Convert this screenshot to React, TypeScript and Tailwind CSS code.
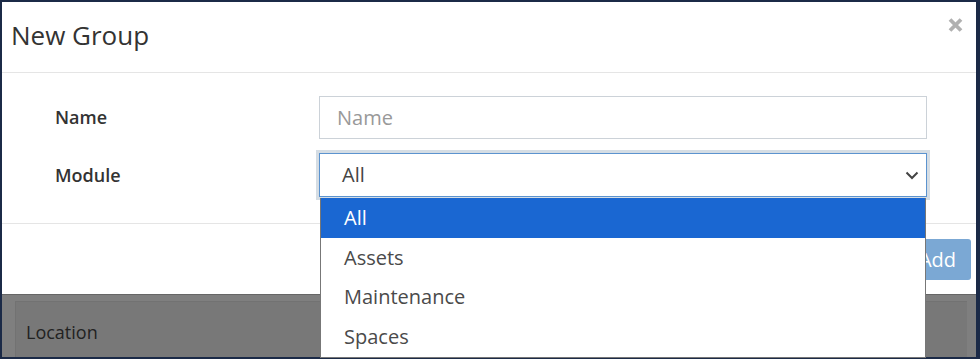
import React from "react";

export default function App() {
  const font = { fontFamily: '"Open Sans", "Noto Sans", sans-serif' };
  return (
    <div
      className="w-[980px] h-[359px] bg-[#1b2a47] pt-[2px] pl-[2px] pr-[4px] pb-[2px] overflow-hidden"
      style={font}
    >
      <div className="relative flex h-full flex-col bg-[#7f7f7f]">
        {/* Modal */}
        <div className="flex h-[293px] flex-col bg-white border-b border-[#666]">
          {/* Header */}
          <div className="relative flex h-[71px] items-center border-b border-[#e5e5e5] pl-[9px]">
            <h4 className="text-[26px] leading-none text-[#333] -mt-[4px]">New Group</h4>
            <svg
              className="absolute right-[13px] top-[16px]"
              width="15"
              height="14"
              viewBox="0 0 15 14"
            >
              <path d="M2 1.5 L13 12.5 M13 1.5 L2 12.5" stroke="#b0b0b0" strokeWidth="3.8" strokeLinecap="butt" />
            </svg>
          </div>
          {/* Body */}
          <div className="flex h-[151px] flex-col gap-[14px] border-b border-[#e5e5e5] pt-[23px]">
            <div className="flex items-center">
              <label className="w-[317px] pl-[53px] text-[18px] font-semibold text-[#333]">Name</label>
              <div className="flex h-[43px] w-[608px] items-center border border-[#ccd2d8] bg-white pl-[17px] text-[20px] text-[#999]">
                Name
              </div>
            </div>
            <div className="flex items-center">
              <label className="w-[317px] pl-[53px] text-[18px] font-semibold text-[#333]">Module</label>
              <div className="flex h-[44px] w-[608px] items-center justify-between border border-[#5b93cf] bg-white pl-[22px] pr-[7px] text-[20px] text-[#444] shadow-[0_0_0_3px_#d5dde4]">
                <span>All</span>
                <svg width="14" height="9" viewBox="0 0 14 9">
                  <path d="M1.5 1.5 L7 7 L12.5 1.5" fill="none" stroke="#444" strokeWidth="2" />
                </svg>
              </div>
            </div>
          </div>
          {/* Footer */}
          <div className="flex flex-1 items-start justify-end pt-[15px] pr-[5px]">
            <button className="h-[41px] w-[80px] rounded-[3px] bg-[#7ba8d4] pr-[15px] text-right text-[20px] text-white">
              Add
            </button>
          </div>
        </div>
        {/* Backdrop content */}
        <div className="flex flex-1 pl-[13px] pr-[9px] pt-[6px]">
          <div className="flex flex-1 items-start border-t border-l border-[#727272] bg-[#787878] pl-[10px] pt-[17px] text-[18px] text-[#222]">
            Location
          </div>
        </div>

        {/* Dropdown list */}
        <div className="absolute left-[318px] top-[196px] w-[606px] border-l border-r border-b border-[#777] bg-white text-[20px] text-[#4a4a4a]">
          <div className="flex h-[40px] items-center bg-[#1a67d2] pl-[23px] text-white">All</div>
          <div className="flex h-[39px] items-center pl-[23px]">Assets</div>
          <div className="flex h-[40px] items-center pl-[23px]">Maintenance</div>
          <div className="flex h-[40px] items-center pl-[23px]">Spaces</div>
        </div>
      </div>
    </div>
  );
}
